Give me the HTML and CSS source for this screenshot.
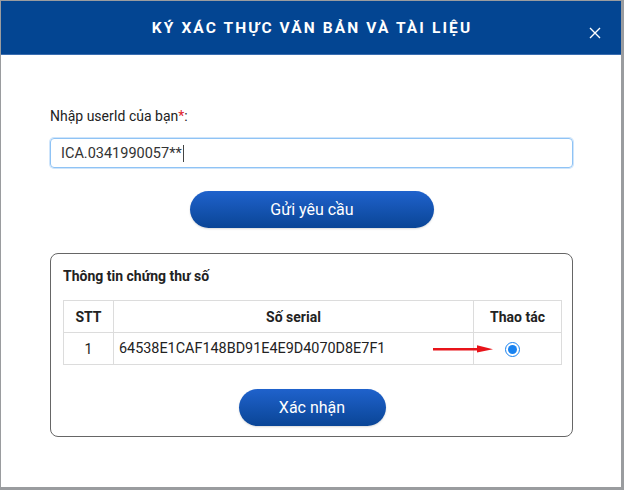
FILE: index.html
```html
<!DOCTYPE html>
<html lang="vi">
<head>
<meta charset="utf-8">
<link rel="stylesheet" href="styles.css">
</head>
<body>
<div class="backdrop">
  <div class="modal">
    <div class="modal-header">
      <h1 class="modal-title">KÝ XÁC THỰC VĂN BẢN VÀ TÀI LIỆU</h1>
      <span class="modal-close">
        <svg width="12" height="12" viewBox="0 0 12 12"><path d="M1 1L11 11M11 1L1 11" stroke="#fff" stroke-width="1.4" fill="none"/></svg>
      </span>
    </div>
    <div class="modal-body">
      <label class="field-label">Nhập userId của bạn<span class="req">*</span>:</label>
      <div class="input-box"><span class="input-text">ICA.0341990057**</span><span class="caret"></span></div>
      <div class="btn-row"><button class="btn btn-send">Gửi yêu cầu</button></div>
      <div class="cert-box">
        <div class="cert-title">Thông tin chứng thư số</div>
        <table class="cert-table">
          <thead>
            <tr><th class="col-stt">STT</th><th class="col-serial">Số serial</th><th class="col-act">Thao tác</th></tr>
          </thead>
          <tbody>
            <tr>
              <td class="col-stt">1</td>
              <td class="col-serial serial">64538E1CAF148BD91E4E9D4070D8E7F1</td>
              <td class="col-act act-cell">
                <svg class="arrow" width="64" height="10" viewBox="0 0 64 10"><path d="M2 5.2H50" stroke="#e8141a" stroke-width="2.4"/><path d="M46 1.2L62 5.2L46 8.6Z" fill="#e8141a"/></svg>
                <span class="radio"><span class="radio-dot"></span></span>
              </td>
            </tr>
          </tbody>
        </table>
        <div class="btn-row confirm-row"><button class="btn btn-confirm">Xác nhận</button></div>
      </div>
    </div>
  </div>
</div>
</body>
</html>
```

FILE: styles.css
```css
html, body {
  margin: 0;
  padding: 0;
}
body {
  width: 624px;
  height: 490px;
  overflow: hidden;
  background: #9a9c9f;
  font-family: Roboto, "Liberation Sans", Arial, sans-serif;
}
.backdrop {
  padding: 1px 0 0 1px;
}
.modal {
  width: 620px;
  height: 486px;
  background: #fff;
}
.modal-header {
  height: 54px;
  background: #034592;
  display: flex;
  align-items: center;
  justify-content: center;
  position: relative;
  border-bottom: 1px solid #3a6db0;
  box-sizing: border-box;
}
.modal-title {
  margin: 0;
  color: #fff;
  font-size: 15.5px;
  font-weight: 700;
  letter-spacing: 2.1px;
  padding-left: 2px;
}
.modal-close {
  position: absolute;
  right: 20px;
  top: 26px;
  display: flex;
}
.modal-body {
  padding: 52px 48px 0 49px;
}
.field-label {
  display: block;
  font-size: 14px;
  color: #222;
  line-height: 18px;
}
.req {
  color: #e0232a;
}
.input-box {
  margin-top: 13px;
  height: 30px;
  box-sizing: border-box;
  border: 1px solid #8fc3f5;
  border-radius: 4px;
  box-shadow: 0 0 0 1px #cfe5fb;
  display: flex;
  align-items: center;
  padding-left: 10px;
  font-size: 14.5px;
  color: #333;
}
.caret {
  display: inline-block;
  width: 1px;
  height: 17px;
  background: #444;
  margin-left: 1px;
}
.btn-row {
  display: flex;
  justify-content: center;
  margin-top: 23px;
}
.btn {
  border: none;
  border-radius: 20px;
  height: 37px;
  color: #fff;
  font-family: Roboto, "Liberation Sans", Arial, sans-serif;
  font-size: 16px;
  background: linear-gradient(#1f62cc, #0a4596);
  box-shadow: 0 1px 2px rgba(0,0,0,0.15);
  padding: 0;
}
.btn-send {
  width: 244px;
  margin-left: 1px;
}
.cert-box {
  margin-top: 25px;
  height: 184px;
  box-sizing: border-box;
  border: 1px solid #666;
  border-radius: 8px;
  padding: 13px 11px 0 12px;
}
.cert-title {
  font-size: 14px;
  font-weight: 700;
  color: #222;
  line-height: 18px;
}
.cert-table {
  margin-top: 15px;
  width: 499px;
  border-collapse: collapse;
  font-size: 14px;
  color: #222;
}
.cert-table th, .cert-table td {
  border: 1px solid #dcdcdc;
  height: 31px;
  padding: 0;
  text-align: center;
}
.cert-table th {
  font-weight: 700;
}
.col-stt {
  width: 49px;
}
.col-act {
  width: 87px;
}
.cert-table td.serial {
  text-align: left;
  padding-left: 5px;
  font-size: 14.4px;
}
.act-cell {
  position: relative;
}
.arrow {
  position: absolute;
  left: -43px;
  top: 11px;
}
.radio {
  display: inline-flex;
  align-items: center;
  justify-content: center;
  width: 15px;
  height: 15px;
  box-sizing: border-box;
  border: 1px solid #1a83f0;
  border-radius: 50%;
  vertical-align: middle;
  margin-right: 10px;
}
.radio-dot {
  width: 9px;
  height: 9px;
  border-radius: 50%;
  background: #1a83f0;
}
.confirm-row {
  margin-top: 24px;
}
.btn-confirm {
  width: 147px;
}
```
